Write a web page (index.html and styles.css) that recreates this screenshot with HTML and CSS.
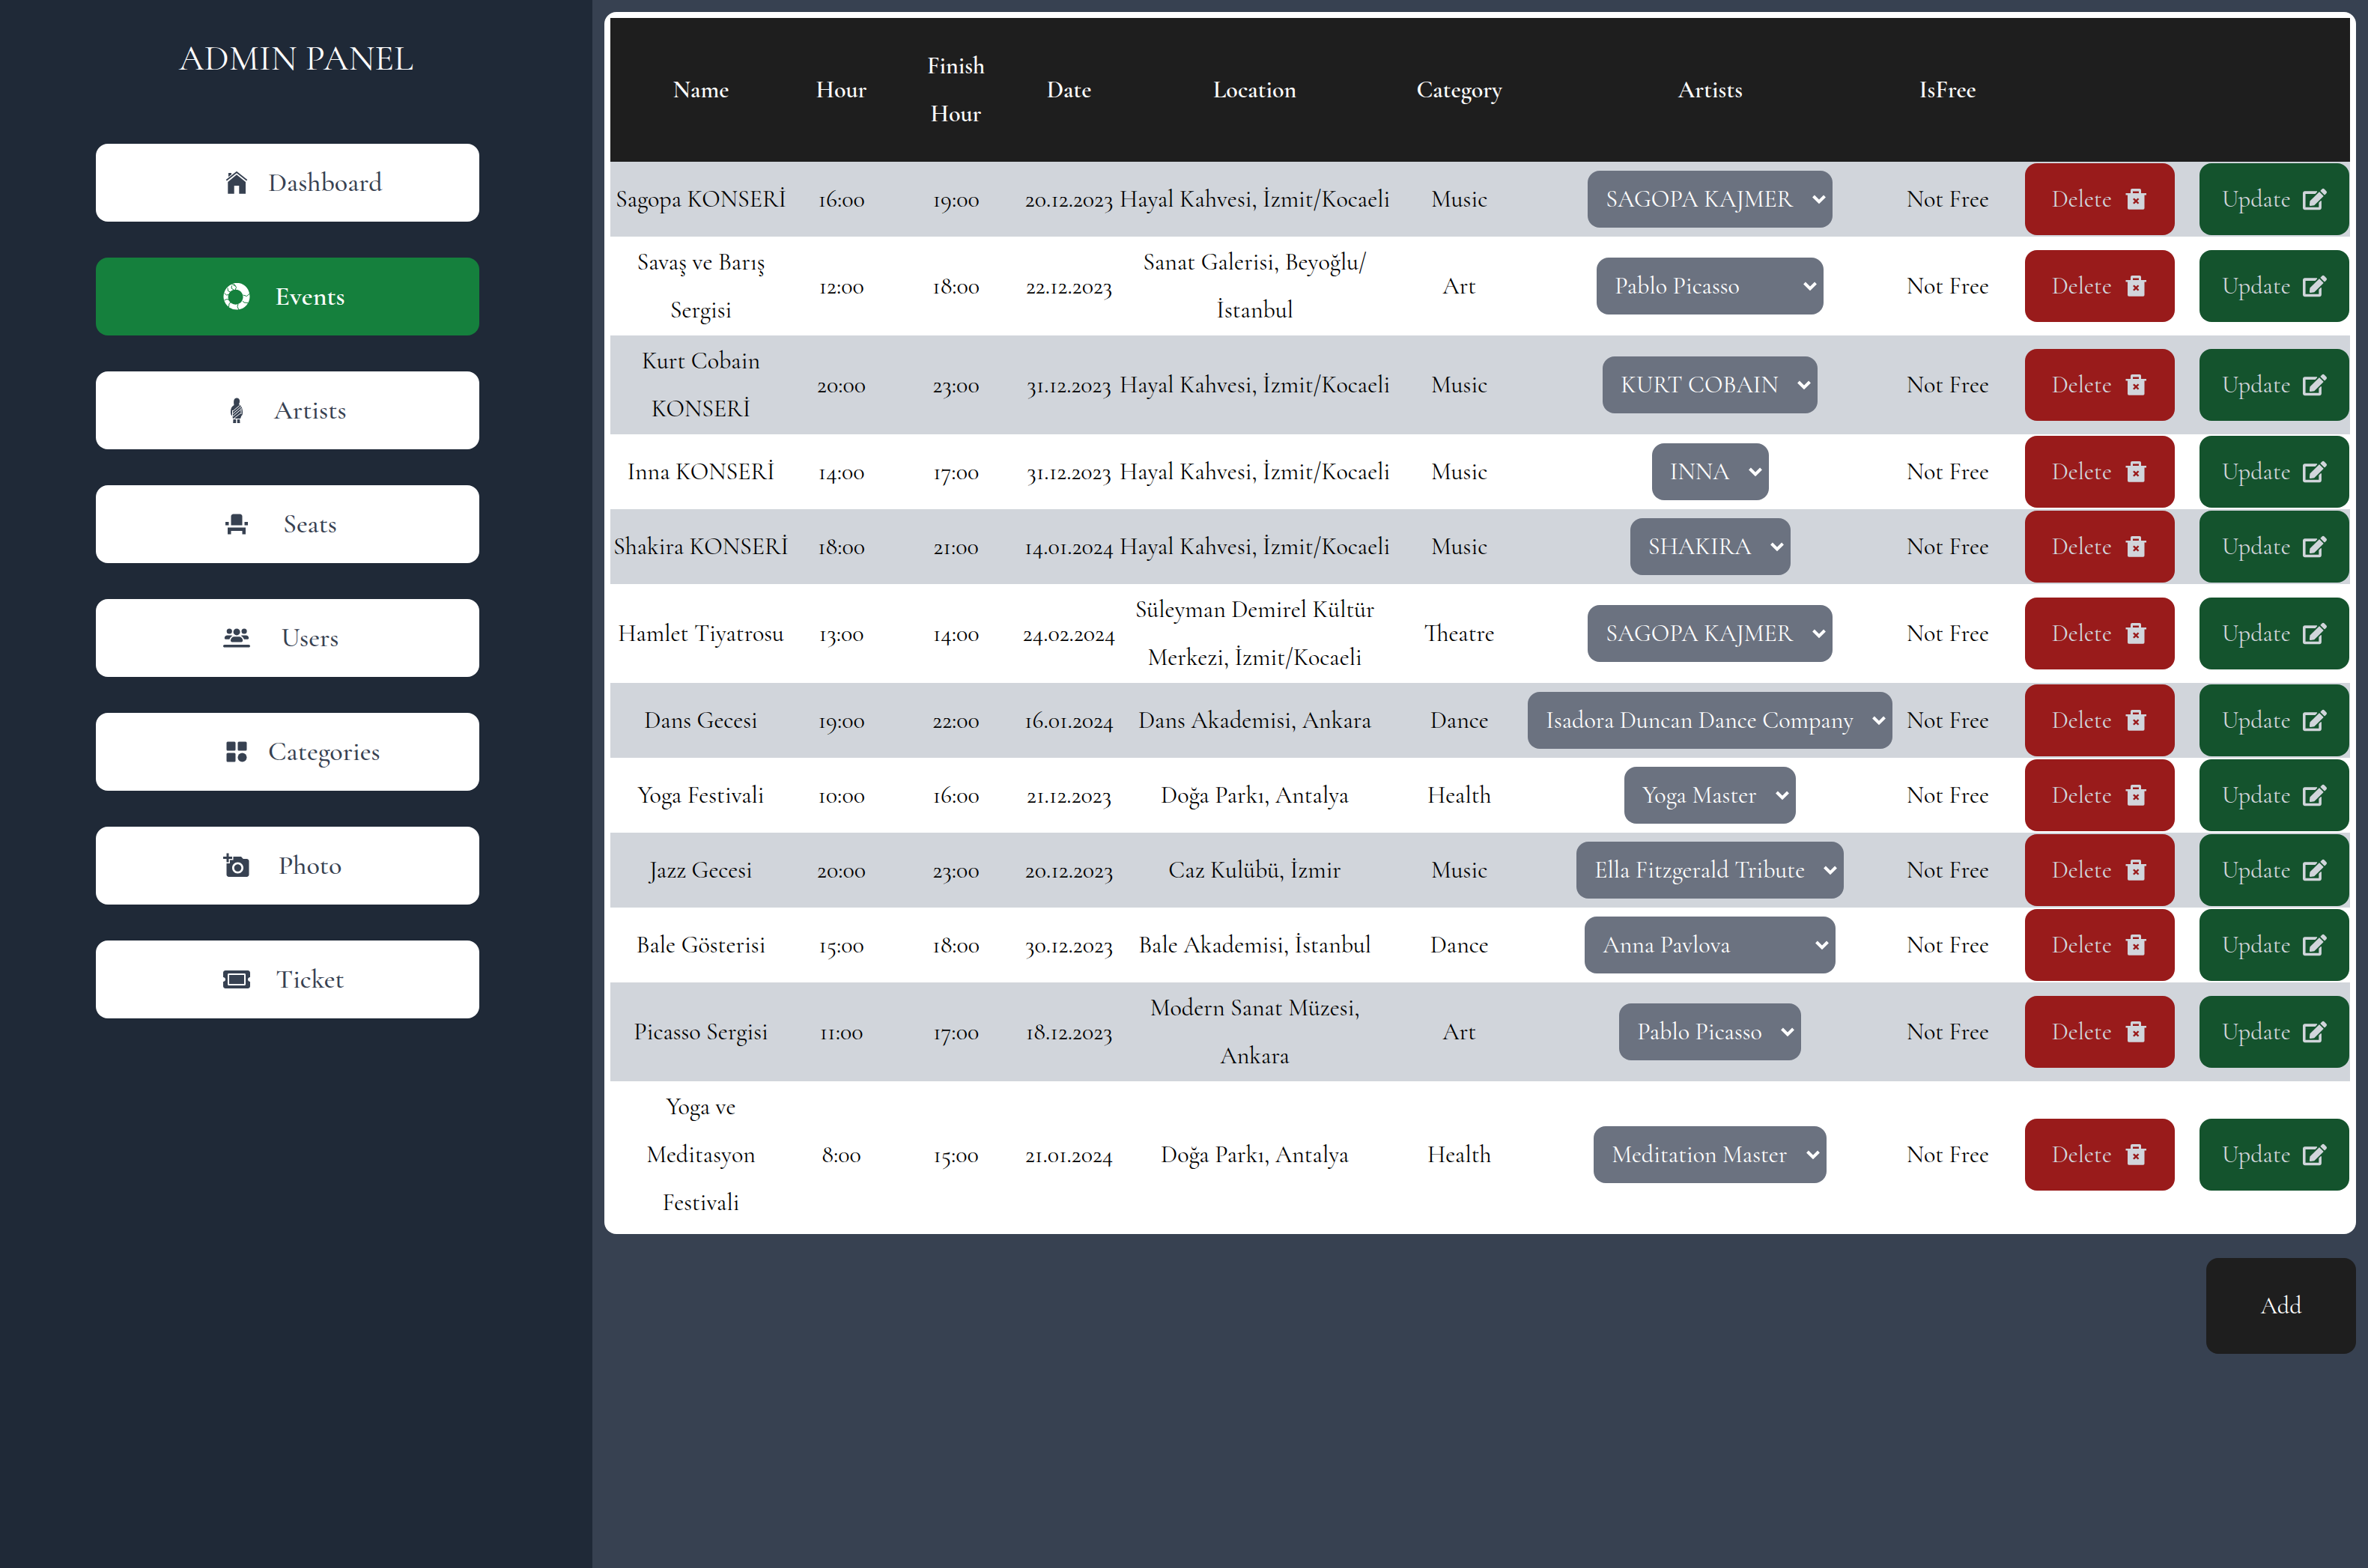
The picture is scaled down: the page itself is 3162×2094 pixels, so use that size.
FILE: index.html
```html
<!DOCTYPE html>
<html lang="tr">
<head>
<meta charset="utf-8">
<meta name="viewport" content="width=device-width, initial-scale=1">
<title>Admin Panel</title>
<link rel="stylesheet" href="styles.css">
</head>
<body>
<svg class="sprite" aria-hidden="true">
  <symbol id="trash" viewBox="0 0 32 32"><path fill-rule="evenodd" d="M11 2h10a2 2 0 0 1 2 2v4h7v2.600h-2.500V28a1.700 1.700 0 0 1-1.700 1.700H6.700A1.700 1.700 0 0 1 5 28V10.600H2.500V8H9V4a2 2 0 0 1 2-2zm1 3.400V8h8V5.400zM12 16l2.500 2.500L12 21l1.800 1.600 2.400-2.300 2.500 2.300 1.700-1.600-2.500-2.500L20.400 16l-1.700-1.600-2.500 2.300-2.400-2.300z"/></symbol>
  <symbol id="edit" viewBox="0 0 576 512"><path d="M402.600 83.200l90.200 90.200c3.800 3.800 3.800 10 0 13.800L274.400 405.600l-92.800 10.300c-12.400 1.400-22.900-9.100-21.500-21.500l10.300-92.800L388.800 83.200c3.800-3.800 10-3.800 13.800 0zm162-22.900l-48.800-48.800c-15.200-15.200-39.900-15.200-55.200 0l-35.400 35.400c-3.800 3.800-3.800 10 0 13.800l90.200 90.200c3.800 3.800 10 3.800 13.800 0l35.400-35.400c15.200-15.300 15.200-40 0-55.200zM384 346.200V448H64V128h229.800c3.200 0 6.200-1.300 8.500-3.500l40-40c7.600-7.600 2.200-20.500-8.500-20.500H48C21.500 64 0 85.500 0 112v352c0 26.500 21.500 48 48 48h352c26.500 0 48-21.500 48-48V306.200c0-10.700-12.900-16-20.500-8.500l-40 40c-2.200 2.300-3.500 5.300-3.500 8.500z"/></symbol>
</svg>
<div class="page">
  <aside class="sidebar">
    <h1 class="brand">ADMIN PANEL</h1>
    <nav class="menu">
      <a class="menu-link" href="#dashboard">
        <svg class="menu-icon" viewBox="0 0 36 36"><path d="M7 5h4v4.500l-4 3.200zM18 7.300l12 9.600v15.800h-8.700V22h-6.600v10.700H6.300V16.900z"/><path d="M4 15L18 4l14 11" fill="none" stroke="#fff" stroke-width="4"/><path d="M4.300 14.800L18 4l13.700 10.800" fill="none" stroke="currentColor" stroke-width="1.800"/></svg>
        <span class="menu-label">Dashboard</span>
      </a>
      <a class="menu-link active" href="#events" aria-current="page">
        <svg class="menu-icon" viewBox="0 0 36 36"><path fill-rule="evenodd" d="M14 0C27-2 35.500 7 35.500 18A17.500 17.500 0 1 1 12 1.600zM16.500 8.700a10 10 0 1 0 .1 0z"/><g fill="none" stroke="#15803d" stroke-width="1"><path d="M13.500 0L17.500 5.500L16 9.500M12 1.500l5 3"/><path d="M11.500 3.500l-.5 3.500 3 2"/><path d="M6 6.500l.5 4L9.500 12"/><path d="M1.500 13.500l3 2.500 3-.5"/><path d="M1.500 23l3.500-1.500L8 22.500"/><path d="M7.500 32l.5-4.500 3-2.500"/><path d="M21 36l-2-4.500 1-3.500"/><path d="M33.500 26.500l-5.500-.5-2-2"/><path d="M35.500 14l-4 3.500-5-1.500"/></g></svg>
        <span class="menu-label">Events</span>
      </a>
      <a class="menu-link" href="#artists">
        <svg class="menu-icon" viewBox="0 0 36 36"><path d="M18 1.500c3 0 4.400 2.200 4 5-.1 1.500-.6 2.600-1 3.500 3.500 1.500 5 6 5 10.500 0 2.500-.4 4.500-1.500 4.500L23 29H13l-.7-4C10.500 25.500 10 22 10 19.500c0-4 1.500-7 4.500-8.500-1-6 0-9.500 3.500-9.500zM13.500 30h3.700v5h-4zM18.700 30h3.500l.3 5h-3.800z"/><path d="M13 19l9.500-8M13 22.500L24 13M13 26l10.500-9M14 29l9-7M12.500 18v8M24 15v8" fill="none" stroke="#fff" stroke-width="1"/></svg>
        <span class="menu-label">Artists</span>
      </a>
      <a class="menu-link" href="#seats">
        <svg class="menu-icon" viewBox="0 0 24 24"><path d="M4 18v3h3v-3h10v3h3v-6H4zm15-8h3v3h-3zM2 10h3v3H2zm15 3H7V5c0-1.100.9-2 2-2h6c1.100 0 2 .9 2 2v8z"/></svg>
        <span class="menu-label">Seats</span>
      </a>
      <a class="menu-link" href="#users">
        <svg class="menu-icon" viewBox="0 0 640 512"><path d="M211.200 96a64 64 0 1 0 -128 0 64 64 0 1 0 128 0zM32 256c0 17.700 14.300 32 32 32h85.600c10.100-39.400 38.600-71.500 75.800-86.600c-9.700-6-21.200-9.400-33.400-9.400H96c-35.300 0-64 28.700-64 64zm461.600 32H576c17.700 0 32-14.300 32-32c0-35.300-28.700-64-64-64H448c-11.700 0-22.700 3.100-32.100 8.600c38.100 14.800 67.400 47.300 77.700 87.400zM391.200 226.400c-6.900-1.600-14.200-2.400-21.600-2.400h-96c-8.500 0-16.700 1.100-24.500 3.100c-30.800 8.100-55.600 31.100-66.100 60.900c-3.500 10-5.500 20.800-5.500 32c0 17.700 14.300 32 32 32h224c17.700 0 32-14.300 32-32c0-11.200-1.900-22-5.500-32c-10.800-30.700-36.800-54.200-68.900-61.600zM563.200 96a64 64 0 1 0 -128 0 64 64 0 1 0 128 0zM321.600 192a80 80 0 1 0 0-160 80 80 0 1 0 0 160zM32 416c-17.700 0-32 14.300-32 32s14.300 32 32 32H608c17.700 0 32-14.300 32-32s-14.300-32-32-32H32z"/></svg>
        <span class="menu-label">Users</span>
      </a>
      <a class="menu-link" href="#categories">
        <svg class="menu-icon" viewBox="0 0 24 24"><path d="M10 3H4a1 1 0 0 0-1 1v6a1 1 0 0 0 1 1h6a1 1 0 0 0 1-1V4a1 1 0 0 0-1-1zm10 0h-6a1 1 0 0 0-1 1v6a1 1 0 0 0 1 1h6a1 1 0 0 0 1-1V4a1 1 0 0 0-1-1zM10 13H4a1 1 0 0 0-1 1v6a1 1 0 0 0 1 1h6a1 1 0 0 0 1-1v-6a1 1 0 0 0-1-1z"/><circle cx="17" cy="17" r="4"/></svg>
        <span class="menu-label">Categories</span>
      </a>
      <a class="menu-link" href="#photo">
        <svg class="menu-icon" viewBox="0 0 24 24"><path d="M3 4V1h2v3h3v2H5v3H3V6H0V4h3zm3 6V7h3V4h7l1.830 2H21c1.100 0 2 .9 2 2v12c0 1.100-.9 2-2 2H5c-1.100 0-2-.9-2-2V10h3zm7 9c2.760 0 5-2.240 5-5s-2.240-5-5-5-5 2.240-5 5 2.240 5 5 5zm-3.200-5c0 1.770 1.430 3.200 3.200 3.200s3.200-1.430 3.200-3.200-1.430-3.200-3.200-3.200-3.200 1.430-3.200 3.200z"/></svg>
        <span class="menu-label">Photo</span>
      </a>
      <a class="menu-link" href="#ticket">
        <svg class="menu-icon" viewBox="0 0 576 512"><path d="M128 160h320v192H128V160zm400 96c0 26.510 21.490 48 48 48v96c0 26.510-21.490 48-48 48H48c-26.510 0-48-21.490-48-48v-96c26.510 0 48-21.490 48-48s-21.490-48-48-48v-96c0-26.510 21.490-48 48-48h480c26.510 0 48 21.490 48 48v96c-26.510 0-48 21.490-48 48zm-48-104c0-13.255-10.745-24-24-24H120c-13.255 0-24 10.745-24 24v208c0 13.255 10.745 24 24 24h336c13.255 0 24-10.745 24-24V152z"/></svg>
        <span class="menu-label">Ticket</span>
      </a>
    </nav>
  </aside>

  <main class="content">
    <div class="card">
      <table class="events">
        <colgroup>
          <col class="c-name"><col class="c-hour"><col class="c-finish"><col class="c-date"><col class="c-location"><col class="c-category"><col class="c-artists"><col class="c-free"><col class="c-delete"><col class="c-update">
        </colgroup>
        <thead>
          <tr><th>Name</th><th>Hour</th><th>Finish<br>Hour</th><th>Date</th><th>Location</th><th>Category</th><th>Artists</th><th>IsFree</th><td></td><td></td></tr>
        </thead>
        <tbody>
          <tr><td>Sagopa KONSERİ</td><td>16:00</td><td>19:00</td><td>20.12.2023</td><td>Hayal Kahvesi, İzmit/Kocaeli</td><td>Music</td><td><select class="artists" aria-label="Artists"><option>SAGOPA KAJMER</option></select></td><td>Not Free</td><td><button class="btn delete" type="button">Delete<svg class="btn-icon"><use href="#trash"/></svg></button></td><td><button class="btn update" type="button">Update<svg class="btn-icon"><use href="#edit"/></svg></button></td></tr>
          <tr><td>Savaş ve Barış<br>Sergisi</td><td>12:00</td><td>18:00</td><td>22.12.2023</td><td>Sanat Galerisi, Beyoğlu/<br>İstanbul</td><td>Art</td><td><select class="artists" aria-label="Artists"><option>Pablo Picasso</option><option>Vincent van Gogh</option></select></td><td>Not Free</td><td><button class="btn delete" type="button">Delete<svg class="btn-icon"><use href="#trash"/></svg></button></td><td><button class="btn update" type="button">Update<svg class="btn-icon"><use href="#edit"/></svg></button></td></tr>
          <tr><td>Kurt Cobain<br>KONSERİ</td><td>20:00</td><td>23:00</td><td>31.12.2023</td><td>Hayal Kahvesi, İzmit/Kocaeli</td><td>Music</td><td><select class="artists" aria-label="Artists"><option>KURT COBAIN</option></select></td><td>Not Free</td><td><button class="btn delete" type="button">Delete<svg class="btn-icon"><use href="#trash"/></svg></button></td><td><button class="btn update" type="button">Update<svg class="btn-icon"><use href="#edit"/></svg></button></td></tr>
          <tr><td>Inna KONSERİ</td><td>14:00</td><td>17:00</td><td>31.12.2023</td><td>Hayal Kahvesi, İzmit/Kocaeli</td><td>Music</td><td><select class="artists" aria-label="Artists"><option>INNA</option></select></td><td>Not Free</td><td><button class="btn delete" type="button">Delete<svg class="btn-icon"><use href="#trash"/></svg></button></td><td><button class="btn update" type="button">Update<svg class="btn-icon"><use href="#edit"/></svg></button></td></tr>
          <tr><td>Shakira KONSERİ</td><td>18:00</td><td>21:00</td><td>14.01.2024</td><td>Hayal Kahvesi, İzmit/Kocaeli</td><td>Music</td><td><select class="artists" aria-label="Artists"><option>SHAKIRA</option></select></td><td>Not Free</td><td><button class="btn delete" type="button">Delete<svg class="btn-icon"><use href="#trash"/></svg></button></td><td><button class="btn update" type="button">Update<svg class="btn-icon"><use href="#edit"/></svg></button></td></tr>
          <tr><td>Hamlet Tiyatrosu</td><td>13:00</td><td>14:00</td><td>24.02.2024</td><td>Süleyman Demirel Kültür<br>Merkezi, İzmit/Kocaeli</td><td>Theatre</td><td><select class="artists" aria-label="Artists"><option>SAGOPA KAJMER</option></select></td><td>Not Free</td><td><button class="btn delete" type="button">Delete<svg class="btn-icon"><use href="#trash"/></svg></button></td><td><button class="btn update" type="button">Update<svg class="btn-icon"><use href="#edit"/></svg></button></td></tr>
          <tr><td>Dans Gecesi</td><td>19:00</td><td>22:00</td><td>16.01.2024</td><td>Dans Akademisi, Ankara</td><td>Dance</td><td><select class="artists" aria-label="Artists"><option>Isadora Duncan Dance Company</option></select></td><td>Not Free</td><td><button class="btn delete" type="button">Delete<svg class="btn-icon"><use href="#trash"/></svg></button></td><td><button class="btn update" type="button">Update<svg class="btn-icon"><use href="#edit"/></svg></button></td></tr>
          <tr><td>Yoga Festivali</td><td>10:00</td><td>16:00</td><td>21.12.2023</td><td>Doğa Parkı, Antalya</td><td>Health</td><td><select class="artists" aria-label="Artists"><option>Yoga Master</option></select></td><td>Not Free</td><td><button class="btn delete" type="button">Delete<svg class="btn-icon"><use href="#trash"/></svg></button></td><td><button class="btn update" type="button">Update<svg class="btn-icon"><use href="#edit"/></svg></button></td></tr>
          <tr><td>Jazz Gecesi</td><td>20:00</td><td>23:00</td><td>20.12.2023</td><td>Caz Kulübü, İzmir</td><td>Music</td><td><select class="artists" aria-label="Artists"><option>Ella Fitzgerald Tribute</option></select></td><td>Not Free</td><td><button class="btn delete" type="button">Delete<svg class="btn-icon"><use href="#trash"/></svg></button></td><td><button class="btn update" type="button">Update<svg class="btn-icon"><use href="#edit"/></svg></button></td></tr>
          <tr><td>Bale Gösterisi</td><td>15:00</td><td>18:00</td><td>30.12.2023</td><td>Bale Akademisi, İstanbul</td><td>Dance</td><td><select class="artists" aria-label="Artists"><option>Anna Pavlova</option><option>Mikhail Baryshnikov</option></select></td><td>Not Free</td><td><button class="btn delete" type="button">Delete<svg class="btn-icon"><use href="#trash"/></svg></button></td><td><button class="btn update" type="button">Update<svg class="btn-icon"><use href="#edit"/></svg></button></td></tr>
          <tr><td>Picasso Sergisi</td><td>11:00</td><td>17:00</td><td>18.12.2023</td><td>Modern Sanat Müzesi,<br>Ankara</td><td>Art</td><td><select class="artists" aria-label="Artists"><option>Pablo Picasso</option></select></td><td>Not Free</td><td><button class="btn delete" type="button">Delete<svg class="btn-icon"><use href="#trash"/></svg></button></td><td><button class="btn update" type="button">Update<svg class="btn-icon"><use href="#edit"/></svg></button></td></tr>
          <tr><td>Yoga ve<br>Meditasyon<br>Festivali</td><td>8:00</td><td>15:00</td><td>21.01.2024</td><td>Doğa Parkı, Antalya</td><td>Health</td><td><select class="artists" aria-label="Artists"><option>Meditation Master</option></select></td><td>Not Free</td><td><button class="btn delete" type="button">Delete<svg class="btn-icon"><use href="#trash"/></svg></button></td><td><button class="btn update" type="button">Update<svg class="btn-icon"><use href="#edit"/></svg></button></td></tr>
        </tbody>
      </table>
    </div>
    <button class="add" type="button">Add</button>
  </main>
</div>
</body>
</html>
```
FILE: styles.css
```css
*,
*::before,
*::after {
  box-sizing: border-box;
}

body {
  margin: 0;
  background: #374151;
  color: #000;
  font-family: "Cormorant Garamond", "Liberation Serif", serif;
  font-size: 32px;
  line-height: 64px;
}

button,
select {
  font: inherit;
}

.sprite {
  position: absolute;
  width: 0;
  height: 0;
}

.page {
  display: flex;
  min-height: 100vh;
}

/* Sidebar */
.sidebar {
  flex: none;
  width: 25%;
  padding-top: 32px;
  background: #1f2937;
}

.brand {
  margin: 0 0 68px;
  color: #fff;
  font-size: 48px;
  font-weight: 400;
  line-height: 92px;
  text-align: center;
}

.menu {
  display: flex;
  flex-direction: column;
  gap: 48px;
  width: 640px;
  padding-left: 128px;
}

.menu-link {
  display: flex;
  align-items: center;
  gap: 24px;
  height: 104px;
  padding-left: 170px;
  border-radius: 16px;
  background: #fff;
  color: #374151;
  font-size: 36px;
  font-weight: 500;
  text-decoration: none;
}

.menu-link.active {
  background: #15803d;
  color: #fff;
  font-weight: 600;
}

.menu-icon {
  flex: none;
  width: 36px;
  height: 36px;
  fill: currentColor;
}

.menu-label {
  width: 112px;
  text-align: center;
  white-space: nowrap;
}

/* Events table */
.content {
  display: flex;
  flex: 1;
  flex-direction: column;
  gap: 32px;
  min-width: 0;
  padding: 16px;
}

.card {
  padding: 8px;
  border-radius: 16px;
  background: #fff;
}

.events {
  width: 100%;
  border-collapse: collapse;
  table-layout: fixed;
  text-align: center;
  white-space: nowrap;
}

.c-name { width: 243px; }
.c-hour { width: 132px; }
.c-finish { width: 174px; }
.c-date { width: 128px; }
.c-location { width: 368px; }
.c-category { width: 178px; }
.c-artists { width: 492px; }
.c-free { width: 142px; }
.c-delete { width: 264px; }
.c-update { width: 202px; }

.events thead {
  background: #1e1e1e;
  color: #fff;
}

.events th {
  padding: 32px 0;
  font-weight: 600;
}

.events td {
  padding: 2px 0;
  vertical-align: middle;
}

.events tbody tr:nth-child(odd) {
  background: #d1d5db;
}

.artists {
  height: 76px;
  padding: 0 52px 0 24px;
  border: 0;
  border-radius: 16px;
  appearance: none;
  background: #6b7280 url("data:image/svg+xml,%3Csvg xmlns='http://www.w3.org/2000/svg' width='20' height='14'%3E%3Cpath d='M2.500 3l7.500 7.500L17.500 3' fill='none' stroke='%23fff' stroke-width='4'/%3E%3C/svg%3E") no-repeat right 8px center;
  color: #fff;
  vertical-align: middle;
}

.btn {
  display: flex;
  align-items: center;
  justify-content: center;
  gap: 16px;
  width: 200px;
  height: 96px;
  margin: 0 auto;
  padding: 0;
  border: 0;
  border-radius: 16px;
  color: #d1d5db;
}

.btn.delete {
  background: #991b1b;
}

.btn.update {
  background: #14532d;
}

.btn-icon {
  width: 32px;
  height: 32px;
  fill: currentColor;
}

.add {
  align-self: flex-end;
  width: 200px;
  height: 128px;
  border: 0;
  border-radius: 16px;
  background: #1e1e1e;
  color: #fff;
}
```
